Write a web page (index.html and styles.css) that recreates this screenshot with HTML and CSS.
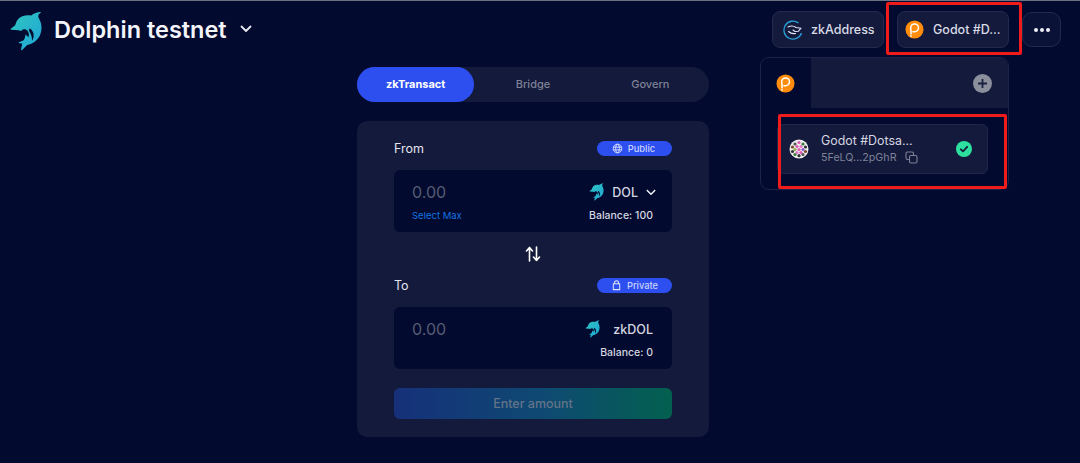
FILE: index.html
```html
<!DOCTYPE html>
<html lang="en">
<head>
<meta charset="utf-8">
<title>Dolphin testnet</title>
<link rel="stylesheet" href="styles.css">
</head>
<body>
<svg class="defs" width="0" height="0" aria-hidden="true">
  <defs>
    <linearGradient id="dg" x1="0" y1="0" x2="1" y2="1"><stop offset="0" stop-color="#2fc6c0"/><stop offset="1" stop-color="#1fa5d6"/></linearGradient>
    <symbol id="dolphin" viewBox="0 0 36 42">
      <path fill="url(#dg)" d="M32 1c-3 0-7 1.500-9.500 3.500C17 3.500 11.500 5 8.500 8.500 7 10.500 6 13 5.500 15L.8 18.500c-.5.500 0 1.200.6 1.200l7.600.600 3 .800c1-1.800 3-2.500 5-1.500 3 1.500 3.500 5 2.500 8l-3-3c-.5 2.500-1 5-2.500 6.500L9.500 33c-.5.500 0 1 .4 1l3 .2-1.200 6.300c-.1.800.6 1 1.200.500l5.300-5.200c6-1 11-5 13.500-10 2.500-6 2.400-12-1-18-.7-1.200-1-2.500-.5-3.700C30.600 3 31.500 2 32.500 1.600 33 1.300 32.600 1 32 1z"/>
      <path fill="#020a2f" d="M21 18c3 2 4.500 5.500 4 9-.2 1.500-.7 3-1.700 4.300 .1-2.300-.3-4.500-1.300-6.800-.6-1.500-1.200-2.600-2-3.700 .3-1 .6-1.800 1-2.800z"/>
    </symbol>
    <symbol id="polkadot" viewBox="0 0 20 20">
      <circle cx="10" cy="10" r="9.500" fill="#ff8c0a"/>
      <path fill="none" stroke="#fff" stroke-width="1.600" stroke-linecap="round" stroke-linejoin="round" d="M6 8.200a4.100 4.100 0 1 1 4.100 4.100H8.300M6 8.200c0 2 .7 3.600.3 6.300"/>
      <circle cx="6.300" cy="16.800" r=".9" fill="#fff"/>
    </symbol>
    <symbol id="chev" viewBox="0 0 12 8">
      <path fill="none" stroke="currentColor" stroke-width="1.800" stroke-linecap="round" stroke-linejoin="round" d="M1.500 1.500 6 6l4.500-4.500"/>
    </symbol>
  </defs>
</svg>

<header class="topbar">
  <div class="brand">
    <svg class="brand-logo"><use href="#dolphin"/></svg>
    <span class="brand-name">Dolphin testnet</span>
    <svg class="brand-chev"><use href="#chev"/></svg>
  </div>
  <div class="actions">
    <button class="pill-btn zk-btn">
      <svg class="zk-icon" viewBox="0 0 20 20">
        <path fill="none" stroke="#2a9fd8" stroke-width="1.300" d="M15.500 3A9 9 0 1 0 18.500 13"/>
        <path fill="none" stroke="#dfe6f5" stroke-width="1.100" stroke-linecap="round" stroke-linejoin="round" d="M5 7c3-1.500 6-1 8 .5l5 .7-2.500 3-3.500.3-2-1.500M5.500 11.500c2 1.800 4.500 2.500 7 2"/>
      </svg>
      <span>zkAddress</span>
    </button>
    <button class="pill-btn wallet-btn">
      <svg class="dot-icon"><use href="#polkadot"/></svg>
      <span>Godot #D...</span>
    </button>
    <button class="more-btn" aria-label="More"><i></i><i></i><i></i></button>
  </div>
</header>

<main class="main">
  <nav class="tabs">
    <span class="tab tab-active">zkTransact</span>
    <span class="tab">Bridge</span>
    <span class="tab">Govern</span>
  </nav>

  <section class="card">
    <div class="row-head">
      <span class="row-label">From</span>
      <span class="badge">
        <svg class="badge-icon badge-icon-globe" viewBox="0 0 12 12"><g fill="none" stroke="#dfe6ff" stroke-width="1"><circle cx="6" cy="6" r="4.700"/><ellipse cx="6" cy="6" rx="2" ry="4.700"/><path d="M1.500 4.500h9M1.500 7.500h9"/></g></svg>
        Public
      </span>
    </div>
    <div class="field">
      <div class="field-left">
        <span class="amount">0.00</span>
        <span class="max">Select Max</span>
      </div>
      <div class="field-right">
        <span class="token">
          <svg class="token-logo"><use href="#dolphin"/></svg>
          DOL
          <svg class="token-chev"><use href="#chev"/></svg>
        </span>
        <span class="balance">Balance: 100</span>
      </div>
    </div>

    <div class="swap">
      <svg class="swap-icon" viewBox="0 0 16 16" width="16" height="16"><path fill="none" stroke="#fff" stroke-width="1.600" stroke-linecap="round" stroke-linejoin="round" d="M4.500 15V1.500M1.500 5l3-3.500 3 3.500M11.500 1v13.500M8.500 11l3 3.500 3-3.500"/></svg>
    </div>

    <div class="row-head">
      <span class="row-label">To</span>
      <span class="badge">
        <svg class="badge-icon" viewBox="0 0 12 12"><path fill="none" stroke="#dfe6ff" stroke-width="1.100" d="M3.800 4V3a2.200 2.200 0 0 1 4.400 0v1M2.500 4.200h7v6.300h-7z" stroke-linejoin="round"/></svg>
        Private
      </span>
    </div>
    <div class="field">
      <div class="field-left">
        <span class="amount">0.00</span>
      </div>
      <div class="field-right">
        <span class="token">
          <svg class="token-logo token-logo-zk"><use href="#dolphin"/></svg>
          zkDOL
        </span>
        <span class="balance">Balance: 0</span>
      </div>
    </div>

    <div class="submit">Enter amount</div>
  </section>
</main>

<aside class="wallet-panel">
  <div class="panel-head">
    <div class="panel-tab"><svg class="dot-icon"><use href="#polkadot"/></svg></div>
    <div class="panel-fill">
      <span class="add"><svg viewBox="0 0 10 10" width="9" height="9"><path stroke="#1a2040" stroke-width="2" d="M5 0v10M0 5h10"/></svg></span>
    </div>
  </div>
  <div class="panel-body">
    <div class="account">
      <svg class="identicon" viewBox="0 0 20 20">
        <circle cx="10" cy="10" r="9.500" fill="#eee"/>
        <g>
          <circle cx="10" cy="3.500" r="1.600" fill="#e05ab8"/><circle cx="6" cy="5" r="1.600" fill="#555"/><circle cx="14" cy="5" r="1.600" fill="#3a7a3a"/>
          <circle cx="3.500" cy="8" r="1.600" fill="#7a4a2a"/><circle cx="8" cy="7.500" r="1.600" fill="#e05ab8"/><circle cx="12" cy="7.500" r="1.600" fill="#e878c8"/><circle cx="16.500" cy="8" r="1.600" fill="#333"/>
          <circle cx="6" cy="10.500" r="1.600" fill="#8bb34a"/><circle cx="10" cy="10.500" r="1.600" fill="#e05ab8"/><circle cx="14" cy="10.500" r="1.600" fill="#8a5ad0"/>
          <circle cx="3.500" cy="12.500" r="1.600" fill="#333"/><circle cx="16.500" cy="12.500" r="1.600" fill="#7a4a2a"/><circle cx="8" cy="13.500" r="1.600" fill="#e878c8"/><circle cx="12" cy="13.500" r="1.600" fill="#e05ab8"/>
          <circle cx="6" cy="15.500" r="1.600" fill="#3a7a3a"/><circle cx="14" cy="15.500" r="1.600" fill="#555"/><circle cx="10" cy="16.700" r="1.600" fill="#333"/>
        </g>
      </svg>
      <div class="account-text">
        <span class="account-name">Godot #Dotsa...</span>
        <span class="account-addr">5FeLQ...2pGhR
          <svg class="copy" viewBox="0 0 13 13"><g fill="none" stroke="#7d8296" stroke-width="1.100"><rect x="1" y="1" width="7.500" height="7.500" rx="1.500"/><rect x="4.500" y="4.500" width="7.500" height="7.500" rx="1.500" fill="#141a3c"/></g></svg>
        </span>
      </div>
      <svg class="check" viewBox="0 0 16 16"><circle cx="8" cy="8" r="8" fill="#2ee0a0"/><path fill="none" stroke="#10203a" stroke-width="1.800" stroke-linecap="round" stroke-linejoin="round" d="M4.800 8.300 7 10.400l4.200-4.600"/></svg>
    </div>
  </div>
</aside>

<div class="mark mark-wallet"></div>
<div class="mark mark-account"></div>
</body>
</html>
```
FILE: styles.css
```css
* { box-sizing: border-box; }
html, body { margin: 0; height: 463px; overflow: hidden; }
body {
  position: relative;
  background: #020a2f;
  border-top: 1px solid #6d7184;
  color: #e6e8f0;
  font-family: Inter, "Liberation Sans", sans-serif;
}
.defs { position: absolute; }

.topbar {
  height: 62px;
  display: flex;
  justify-content: space-between;
  align-items: flex-start;
  padding: 10px 19px 0 10px;
}
.brand { display: flex; align-items: center; height: 40px; }
.brand-logo { width: 34px; height: 40px; }
.brand-name {
  margin-left: 10px;
  margin-top: -3px;
  font-size: 23.500px;
  font-weight: 600;
  color: #f4f5fa;
  white-space: nowrap;
}
.brand-chev { width: 12px; height: 8px; margin-left: 13px; color: #e6e8f0; margin-top: -4px; }

.actions { display: flex; gap: 13px; align-items: center; height: 37px; }
.pill-btn, .more-btn {
  background: #141a3c;
  border: 1px solid #232a4e;
  border-radius: 8px;
  color: #d9dbe5;
  font-family: inherit;
  padding: 0;
}
.pill-btn {
  width: 112px;
  height: 37px;
  display: flex;
  align-items: center;
  font-size: 12.500px;
  font-weight: 500;
  white-space: nowrap;
}
.zk-btn { padding-left: 10px; gap: 8px; }
.wallet-btn { padding-left: 7px; gap: 9px; }
.zk-icon { width: 20px; height: 20px; flex: none; }
.dot-icon { width: 19px; height: 19px; flex: none; display: block; }
.more-btn {
  width: 39px;
  height: 35px;
  border-radius: 10px;
  display: flex;
  align-items: center;
  justify-content: center;
  gap: 2px;
  background: #0b1238;
}
.more-btn i { width: 4px; height: 4px; border-radius: 50%; background: #eceef5; }

.main {
  width: 352px;
  margin-left: 357px;
  display: flex;
  flex-direction: column;
  margin-top: 4px;
}
.tabs {
  display: flex;
  height: 35px;
  background: #141a3c;
  border-radius: 18px;
}
.tab {
  flex: 1;
  display: flex;
  align-items: center;
  justify-content: center;
  font-size: 11px;
  font-weight: 500;
  color: #7d8296;
  padding-bottom: 2px;
}
.tab-active {
  background: #2d4ff0;
  border-radius: 18px;
  color: #fff;
  font-weight: 700;
}

.card {
  margin-top: 19px;
  height: 316px;
  background: #141a3c;
  border-radius: 10px;
  padding: 20px 37px 0;
  display: flex;
  flex-direction: column;
}
.row-head {
  display: flex;
  justify-content: space-between;
  align-items: center;
  height: 15px;
}
.row-label { font-size: 12.500px; font-weight: 400; color: #e3e5ee; }
.badge {
  width: 75px;
  height: 15px;
  border-radius: 8px;
  background: #2d4ff0;
  color: #c9d3fb;
  font-size: 9.300px;
  font-weight: 500;
  display: flex;
  align-items: center;
  justify-content: center;
  gap: 5px;
}
.badge-icon { width: 11px; height: 11px; flex: none; }
.badge-icon-globe { margin-left: -2px; }

.field {
  height: 62px;
  margin-top: 14px;
  background: #020a2f;
  border-radius: 6px;
  padding: 12px 19px 0 18px;
  display: flex;
  justify-content: space-between;
}
.field-left { display: flex; flex-direction: column; gap: 7px; }
.amount { font-size: 16px; line-height: 20px; color: #565c72; }
.max { font-size: 9.500px; line-height: 12px; color: #1273e0; margin-top: 1px; }
.field-right { display: flex; flex-direction: column; align-items: flex-end; margin-right: 0; }
.token {
  display: flex;
  align-items: center;
  gap: 8px;
  height: 20px;
  font-size: 12.500px;
  font-weight: 500;
  color: #d4d6e0;
}
.token-logo { width: 16px; height: 18px; margin-right: -1px; }
.token-logo-zk { margin-right: 4px; }
.token-chev { width: 10px; height: 7px; margin-right: -3px; color: #f0f1f6; }
.balance { font-size: 10.500px; font-weight: 500; color: #d4d6e0; margin-top: 6.500px; line-height: 13px; }

.swap { height: 46px; display: flex; align-items: center; justify-content: center; }
.swap-icon { margin-top: -2px; }

.submit {
  margin-top: 19px;
  height: 31px;
  border-radius: 6px;
  background: linear-gradient(90deg, #16307a 0%, #0e4a72 55%, #03604f 100%);
  color: #647488;
  font-size: 12.500px;
  font-weight: 500;
  padding-bottom: 1px;
  display: flex;
  align-items: center;
  justify-content: center;
}

.wallet-panel {
  position: absolute;
  left: 760px;
  top: 56px;
  width: 249px;
  height: 133px;
  border: 1px solid #1c2348;
  border-radius: 9px;
  background: #020a2f;
  overflow: hidden;
}
.panel-head { display: flex; height: 50px; }
.panel-tab {
  width: 50px;
  display: flex;
  align-items: center;
  justify-content: center;
  padding-right: 2px;
}
.panel-fill {
  flex: 1;
  background: #141a3c;
  display: flex;
  align-items: center;
  justify-content: flex-end;
  padding-right: 16px;
}
.add {
  width: 19px;
  height: 19px;
  border-radius: 50%;
  background: #8c8f9c;
  display: flex;
  align-items: center;
  justify-content: center;
}
.panel-body { padding: 16px 20px 0 16px; }
.account {
  height: 50px;
  border: 1px solid #1f2648;
  border-radius: 6px;
  background: #141a3c;
  display: flex;
  align-items: center;
  padding-left: 11px;
}
.identicon { width: 20px; height: 20px; flex: none; }
.account-text { display: flex; flex-direction: column; margin-left: 12px; width: 135px; gap: 3px; margin-top: -2px; }
.account-name { font-size: 12.400px; font-weight: 400; color: #d4d6e0; line-height: 15px; white-space: nowrap; }
.account-addr { font-size: 10.700px; color: #7d8296; display: flex; align-items: center; gap: 8px; line-height: 13px; white-space: nowrap; }
.copy { width: 13px; height: 13px; }
.check { width: 16px; height: 16px; flex: none; }

.mark { position: absolute; border: 3px solid #f01c1c; border-radius: 2px; }
.mark-wallet { left: 886px; top: 1px; width: 136px; height: 53px; }
.mark-account { left: 778px; top: 113px; width: 229px; height: 75px; }
```
